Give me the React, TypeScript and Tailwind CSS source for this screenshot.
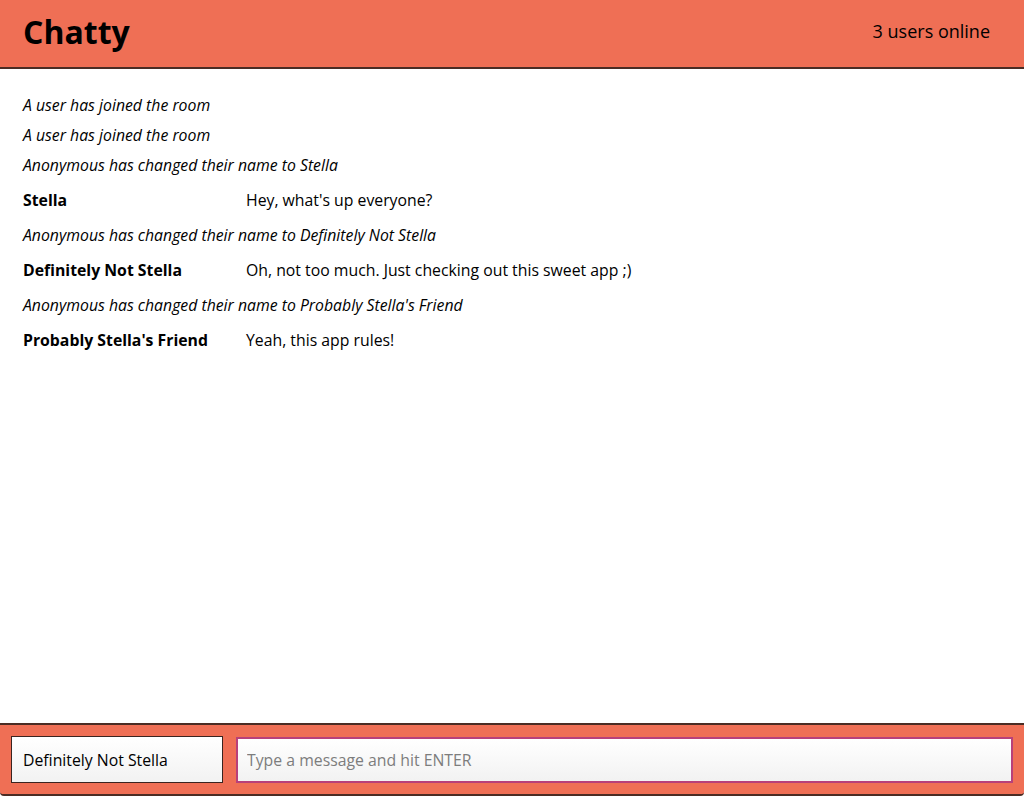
const font = { fontFamily: '"Open Sans", "Noto Sans", sans-serif' }

type Item =
  | { type: 'notification'; content: string }
  | { type: 'message'; username: string; content: string }

const items: Item[] = [
  { type: 'notification', content: 'A user has joined the room' },
  { type: 'notification', content: 'A user has joined the room' },
  { type: 'notification', content: 'Anonymous has changed their name to Stella' },
  { type: 'message', username: 'Stella', content: "Hey, what's up everyone?" },
  { type: 'notification', content: 'Anonymous has changed their name to Definitely Not Stella' },
  { type: 'message', username: 'Definitely Not Stella', content: 'Oh, not too much. Just checking out this sweet app ;)' },
  { type: 'notification', content: "Anonymous has changed their name to Probably Stella's Friend" },
  { type: 'message', username: "Probably Stella's Friend", content: 'Yeah, this app rules!' },
]

export default function App() {
  return (
    <div className="h-[796px] flex flex-col bg-white text-black" style={font}>
      <nav className="h-[69px] shrink-0 flex items-center justify-between bg-[#ef6f55] border-b-2 border-[#4b2c24] pl-[23px] pr-[34px]">
        <a className="text-[32px] font-bold leading-none pb-1">Chatty</a>
        <span className="text-[18px] pb-1">3 users online</span>
      </nav>

      <main className="flex-1 overflow-y-auto px-[23px] pt-[21px]">
        {items.map((item, i) =>
          item.type === 'notification' ? (
            <div key={i} className="italic text-[15.8px] leading-[30px]">
              {item.content}
            </div>
          ) : (
            <div key={i} className="flex text-[15.8px] leading-[30px] py-[5px]">
              <span className="w-[223px] shrink-0 font-bold">{item.username}</span>
              <span>{item.content}</span>
            </div>
          )
        )}
      </main>

      <footer className="h-[73px] shrink-0 flex items-center gap-[13px] bg-[#ef6f55] border-t-2 border-b-2 border-[#4b2c24] rounded-b-[4px] px-[11px]">
        <input
          defaultValue="Definitely Not Stella"
          className="w-[212px] h-[47px] px-[11px] text-[15.8px] border border-[#3a2420] bg-gradient-to-b from-white to-[#f2f2f2] outline-none"
          style={font}
        />
        <input
          autoFocus
          placeholder="Type a message and hit ENTER"
          className="flex-1 h-[46px] px-[9px] text-[15.8px] border-2 border-[#b8407a] bg-gradient-to-b from-white to-[#f2f2f2] outline-none placeholder:text-[#7d7d7d] caret-black"
          style={font}
        />
      </footer>
    </div>
  )
}
